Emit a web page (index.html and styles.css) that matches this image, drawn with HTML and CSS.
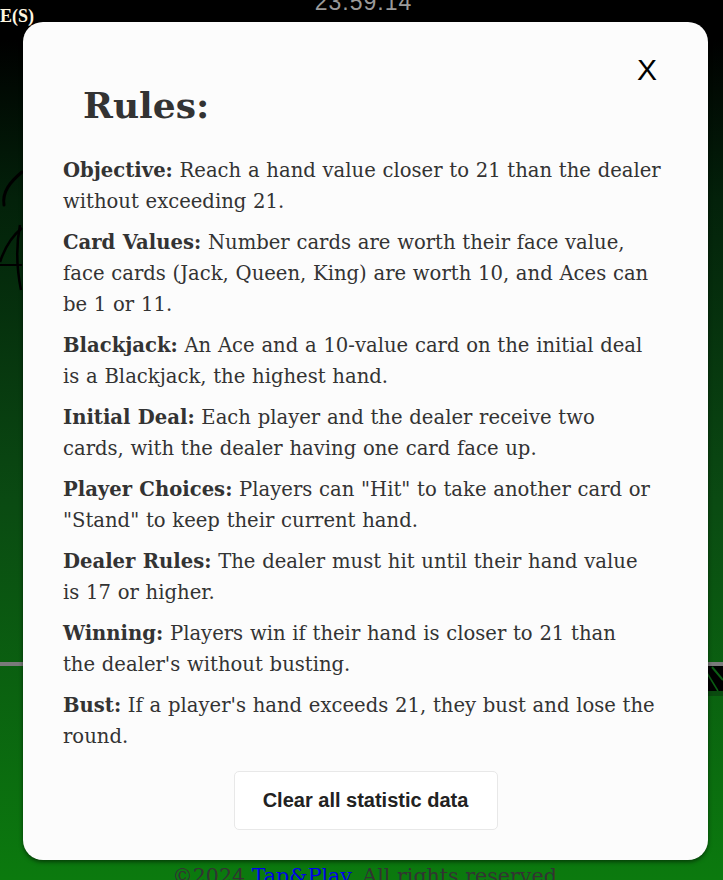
FILE: index.html
```html
<!DOCTYPE html>
<html lang="en">
<head>
<meta charset="utf-8">
<title>Blackjack - Rules</title>
<link rel="stylesheet" href="styles.css">
</head>
<body>
<div class="page">
  <svg class="table-deco" width="723" height="880" viewBox="0 0 723 880" aria-hidden="true">
    <path d="M22 172 C10 182 2 192 4 205" fill="none" stroke="#000" stroke-width="3" stroke-linecap="round"/>
    <path d="M22 228 C12 236 4 250 0 262" fill="none" stroke="#000" stroke-width="2.5"/>
    <path d="M0 265 L22 265" fill="none" stroke="#000" stroke-width="2"/>
    <path d="M20 225 C16 245 17 270 21 290" fill="none" stroke="#000" stroke-width="2.5"/>
    <rect x="0" y="662" width="723" height="4" fill="#7a7a7a"/>
    <rect x="700" y="666" width="23" height="25" fill="#000"/>
    <path d="M712 667 L723 680" stroke="#0b5e14" stroke-width="2" fill="none"/>
    <path d="M704 668 L718 691" stroke="#0b5e14" stroke-width="1.5" fill="none"/>
    <rect x="700" y="691" width="23" height="5" fill="#0a4a0f"/>
  </svg>
  <header class="topbar">
    <span class="lives">E(S)</span>
    <span class="clock">23:59:14</span>
  </header>
  <div class="spacer"></div>
  <footer class="footer">©2024 <a href="#">Tap&amp;Play</a>. All rights reserved</footer>

  <div class="modal" role="dialog" aria-labelledby="rules-title">
    <button class="close" type="button">X</button>
    <h2 id="rules-title" class="modal-title">Rules:</h2>
    <div class="rules">
      <p><strong>Objective:</strong> Reach a hand value closer to 21 than the dealer<br>without exceeding 21.</p>
      <p><strong>Card Values:</strong> Number cards are worth their face value,<br>face cards (Jack, Queen, King) are worth 10, and Aces can<br>be 1 or 11.</p>
      <p><strong>Blackjack:</strong> An Ace and a 10-value card on the initial deal<br>is a Blackjack, the highest hand.</p>
      <p><strong>Initial Deal:</strong> Each player and the dealer receive two<br>cards, with the dealer having one card face up.</p>
      <p><strong>Player Choices:</strong> Players can "Hit" to take another card or<br>"Stand" to keep their current hand.</p>
      <p><strong>Dealer Rules:</strong> The dealer must hit until their hand value<br>is 17 or higher.</p>
      <p><strong>Winning:</strong> Players win if their hand is closer to 21 than<br>the dealer's without busting.</p>
      <p><strong>Bust:</strong> If a player's hand exceeds 21, they bust and lose the<br>round.</p>
    </div>
    <div class="actions">
      <button class="clear-btn" type="button">Clear all statistic data</button>
    </div>
  </div>
</div>
</body>
</html>
```
FILE: styles.css
```css
html, body {
  margin: 0;
  padding: 0;
}
body {
  width: 723px;
  height: 880px;
  overflow: hidden;
  font-family: "DejaVu Serif", serif;
}
.page {
  position: relative;
  width: 723px;
  height: 880px;
  display: flex;
  flex-direction: column;
  background: linear-gradient(to bottom, #000000 0px, #000000 40px, #03210a 200px, #0a4a12 500px, #0b7a0e 880px);
  overflow: hidden;
}
.table-deco {
  position: absolute;
  left: 0;
  top: 0;
}
.topbar {
  position: relative;
  height: 30px;
  display: flex;
  justify-content: center;
}
.lives {
  position: absolute;
  left: 0;
  top: 6px;
  color: #fff6e0;
  font-family: "Liberation Serif", serif;
  font-weight: bold;
  font-size: 18px;
}
.clock {
  margin-top: -11px;
  padding-left: 4px;
  color: #9a9a9a;
  font-family: "Liberation Sans", sans-serif;
  font-size: 23px;
  letter-spacing: 1px;
}
.spacer {
  flex: 1;
}
.footer {
  position: relative;
  top: 7px;
  height: 22px;
  text-align: center;
  color: #333;
  font-size: 20.6px;
  line-height: 22px;
  padding-left: 6px;
  white-space: nowrap;
}
.footer a {
  color: #0000ee;
}
.modal {
  position: absolute;
  left: 23px;
  top: 22px;
  width: 685px;
  height: 838px;
  box-sizing: border-box;
  padding: 40px 36px 30px 40px;
  background: #fcfcfc;
  border-radius: 20px;
  box-shadow: 0 2px 4px rgba(0,0,0,0.5);
  color: #333;
  display: flex;
  flex-direction: column;
}
.close {
  position: absolute;
  top: 31px;
  right: 51px;
  border: none;
  background: none;
  padding: 0;
  font-family: "Liberation Sans", sans-serif;
  font-size: 30px;
  color: #000;
  cursor: pointer;
}
.modal-title {
  margin: 20px 0 27px 20px;
  font-size: 36px;
  line-height: 46px;
  font-weight: bold;
  color: #333;
}
.rules p {
  margin: 0 0 10px 0;
  font-size: 19.6px;
  line-height: 31px;
  word-spacing: 0.5px;
}
.rules strong {
  font-weight: bold;
}
.actions {
  display: flex;
  justify-content: center;
  margin-top: 9px;
  padding-right: 4px;
}
.clear-btn {
  width: 264px;
  height: 59px;
  background: #fff;
  border: 1px solid #e8e8e8;
  border-radius: 5px;
  font-family: "Liberation Sans", sans-serif;
  font-weight: bold;
  font-size: 20px;
  color: #222;
}
```
